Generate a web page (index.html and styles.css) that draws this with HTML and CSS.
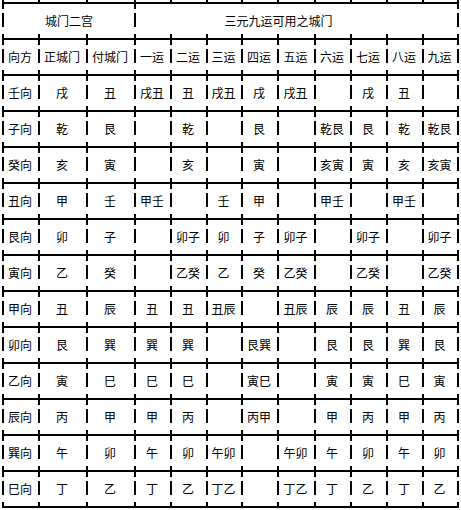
FILE: index.html
```html
<!DOCTYPE html>
<html lang="zh-CN">
<head>
<meta charset="utf-8">
<title>城门二宫</title>
<link rel="stylesheet" href="styles.css">
</head>
<body>
<div class="sheet">
  <div class="topticks"></div>
  <table class="grid">
    <colgroup>
      <col class="c36"><col class="c48"><col class="c48"><col class="c36"><col class="c36"><col class="c35"><col class="c36"><col class="c37"><col class="c36"><col class="c36"><col class="c36"><col class="c37">
    </colgroup>
    <tr class="head">
      <td colspan="3" class="h1">城门二宫</td>
      <td colspan="9" class="h2 last">三元九运可用之城门</td>
    </tr>
    <tr><td>向方</td><td>正城门</td><td>付城门</td><td>一运</td><td>二运</td><td>三运</td><td>四运</td><td>五运</td><td>六运</td><td>七运</td><td>八运</td><td class="last">九运</td></tr>
    <tr><td>壬向</td><td>戌</td><td>丑</td><td>戌丑</td><td>丑</td><td>戌丑</td><td>戌</td><td>戌丑</td><td></td><td>戌</td><td>丑</td><td class="last"></td></tr>
    <tr><td>子向</td><td>乾</td><td>艮</td><td></td><td>乾</td><td></td><td>艮</td><td></td><td>乾艮</td><td>艮</td><td>乾</td><td class="last">乾艮</td></tr>
    <tr><td>癸向</td><td>亥</td><td>寅</td><td></td><td>亥</td><td></td><td>寅</td><td></td><td>亥寅</td><td>寅</td><td>亥</td><td class="last">亥寅</td></tr>
    <tr><td>丑向</td><td>甲</td><td>壬</td><td>甲壬</td><td></td><td>壬</td><td>甲</td><td></td><td>甲壬</td><td></td><td>甲壬</td><td class="last"></td></tr>
    <tr><td>艮向</td><td>卯</td><td>子</td><td></td><td>卯子</td><td>卯</td><td>子</td><td>卯子</td><td></td><td>卯子</td><td></td><td class="last">卯子</td></tr>
    <tr><td>寅向</td><td>乙</td><td>癸</td><td></td><td>乙癸</td><td>乙</td><td>癸</td><td>乙癸</td><td></td><td>乙癸</td><td></td><td class="last">乙癸</td></tr>
    <tr><td>甲向</td><td>丑</td><td>辰</td><td>丑</td><td>丑</td><td>丑辰</td><td></td><td>丑辰</td><td>辰</td><td>辰</td><td>丑</td><td class="last">辰</td></tr>
    <tr><td>卯向</td><td>艮</td><td>巽</td><td>巽</td><td>巽</td><td></td><td>艮巽</td><td></td><td>艮</td><td>艮</td><td>巽</td><td class="last">艮</td></tr>
    <tr><td>乙向</td><td>寅</td><td>巳</td><td>巳</td><td>巳</td><td></td><td>寅巳</td><td></td><td>寅</td><td>寅</td><td>巳</td><td class="last">寅</td></tr>
    <tr><td>辰向</td><td>丙</td><td>甲</td><td>甲</td><td>丙</td><td></td><td>丙甲</td><td></td><td>甲</td><td>丙</td><td>甲</td><td class="last">丙</td></tr>
    <tr><td>巽向</td><td>午</td><td>卯</td><td>午</td><td>卯</td><td>午卯</td><td></td><td>午卯</td><td>午</td><td>卯</td><td>午</td><td class="last">卯</td></tr>
    <tr class="end"><td>巳向</td><td>丁</td><td>乙</td><td>丁</td><td>乙</td><td>丁乙</td><td></td><td>丁乙</td><td>丁</td><td>乙</td><td>丁</td><td class="last">乙</td></tr>
  </table>
</div>
</body>
</html>
```
FILE: styles.css
```css
html, body {
  margin: 0;
  padding: 0;
  background: #fff;
}

body {
  font-family: "Noto Sans CJK SC", "Noto Sans CJK JP", sans-serif;
  font-size: 12px;
  color: #000;
}

.sheet {
  --vl: linear-gradient(to bottom, #000 0 7px, transparent 7px 11px, #000 11px 25px, transparent 25px 32px, #000 32px 36px);
  --tick: linear-gradient(#000, #000);
  padding-left: 2px;
  width: 457px;
}

.topticks {
  height: 2px;
  background-image: var(--tick), var(--tick), var(--tick), var(--tick), var(--tick), var(--tick), var(--tick), var(--tick), var(--tick), var(--tick), var(--tick), var(--tick), var(--tick);
  background-repeat: no-repeat;
  background-size: 2px 2px;
  background-position: 0 0, 36px 0, 84px 0, 132px 0, 168px 0, 204px 0, 239px 0, 275px 0, 312px 0, 348px 0, 384px 0, 420px 0, 455px 0;
}

.grid {
  border-collapse: separate;
  border-spacing: 0;
  table-layout: fixed;
  width: 457px;
}

.c35 { width: 35px; }
.c36 { width: 36px; }
.c37 { width: 37px; }
.c48 { width: 48px; }

.grid td {
  box-sizing: border-box;
  height: 36px;
  padding: 0;
  border-top: 2px solid #000;
  text-align: center;
  vertical-align: middle;
  white-space: nowrap;
  line-height: 14px;
  background-image: var(--vl);
  background-repeat: no-repeat;
  background-size: 2px 36px;
  background-position: 0 0;
  background-origin: border-box;
  background-clip: border-box;
}

.grid td.last {
  padding-right: 2px;
  background-image: var(--vl), var(--vl);
  background-size: 2px 36px, 2px 36px;
  background-position: 0 0, 100% 0;
}

.grid tr.end td {
  height: 38px;
  border-bottom: 2px solid #000;
}

.grid td.h1 {
  padding-left: 2px;
  background-image: var(--vl), var(--tick), var(--tick);
  background-size: 2px 36px, 2px 4px, 2px 4px;
  background-position: 0 0, 36px 32px, 84px 32px;
}

.grid td.h2 {
  padding-right: 36px;
  background-image: var(--vl), var(--vl), var(--tick), var(--tick), var(--tick), var(--tick), var(--tick), var(--tick), var(--tick), var(--tick);
  background-size: 2px 36px, 2px 36px, 2px 4px, 2px 4px, 2px 4px, 2px 4px, 2px 4px, 2px 4px, 2px 4px, 2px 4px;
  background-position: 0 0, 100% 0, 36px 32px, 72px 32px, 107px 32px, 143px 32px, 180px 32px, 216px 32px, 252px 32px, 288px 32px;
}
```
